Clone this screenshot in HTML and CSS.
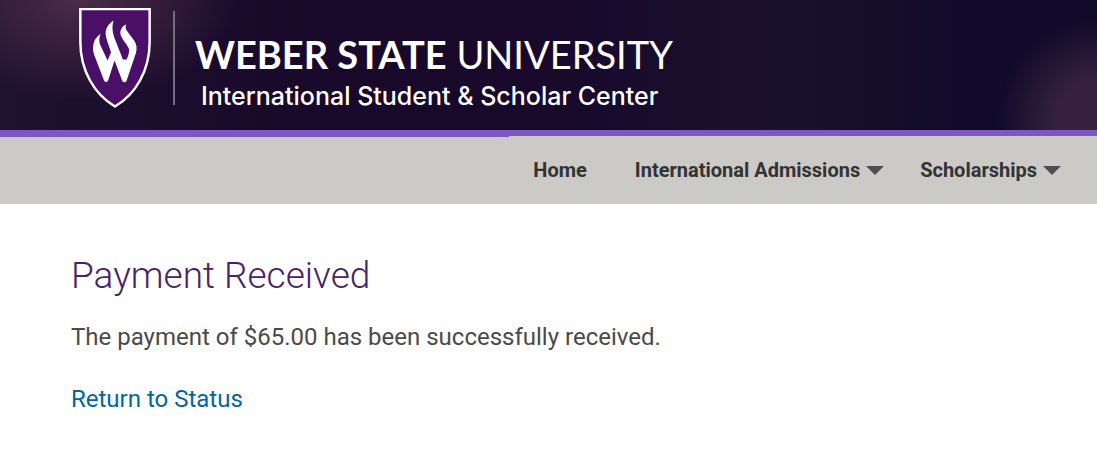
FILE: index.html
```html
<!DOCTYPE html>
<html lang="en">
<head>
  <meta charset="UTF-8">
  <meta name="viewport" content="width=device-width, initial-scale=1.0">
  <title>Payment Received</title>
  <link rel="stylesheet" href="styles.css">
</head>
<body>
  <header class="banner">
    <svg class="shield" viewBox="0 0 72 102" aria-hidden="true">
      <path d="M1 1H71V34C71 63 57 87 36 99.500C15 87 1 63 1 34Z" fill="#4a0f66" stroke="#fff" stroke-width="2.500"/>
      <path d="M21.700 26C17 29 14.500 33 14 38C13.300 43 14.500 46 16 50L25 73.500Q27 76 29 73.500L35.500 53L43.500 74Q45.500 76 47.500 74L57 46C58.500 41 58 37 55.500 33L48 23C46.500 21 46.500 19 47.200 16.300C43 18.500 41 22 41.500 26C42 31 49 37 50.300 42C50.500 46 49 49 47.700 52H44L35 29C33 23 33 18 34.500 12.700C29.500 16 27 20 26.500 25C26.500 31 30.500 39 32 45L28.500 53L21 37C19.500 33 20 29.500 21.700 26Z" fill="#fff"/>
    </svg>
    <div class="wordmark">
      <a class="university" href="#"><strong>WEBER STATE</strong> UNIVERSITY</a>
      <a class="department" href="#">International Student &amp; Scholar Center</a>
    </div>
  </header>

  <nav class="navbar">
    <ul class="menu">
      <li class="plain"><a href="#">Home</a></li>
      <li><a class="dropdown" href="#">International Admissions</a></li>
      <li><a class="dropdown" href="#">Scholarships</a></li>
    </ul>
  </nav>

  <main class="content">
    <h1>Payment Received</h1>
    <p>The payment of $65.00 has been successfully received.</p>
    <p><a href="#">Return to Status</a></p>
  </main>
</body>
</html>
```
FILE: styles.css
```css
* {
  margin: 0;
  padding: 0;
  box-sizing: border-box;
}

body {
  background-color: #fff;
  color: #4a4a4a;
  font-family: Roboto, sans-serif;
  font-size: 24px;
  line-height: 30px;
}

a {
  color: #0066a1;
  text-decoration: none;
}

/* Banner */
.banner {
  display: flex;
  align-items: flex-start;
  padding: 8px 79px 21px;
  background:
    radial-gradient(ellipse 160px 100px at 80px 0, #4a2b48, transparent),
    radial-gradient(circle 100px at 100% 120px, #35213f 40%, transparent),
    linear-gradient(90deg, #1e1230, #180829 30%, #180a2c 55%, #1a112c 70%, #120a2a 88%, #120a2a);
  border-bottom: 7px solid #7e57c5;
}

.shield {
  width: 72px;
  height: 101px;
}

.wordmark {
  display: flex;
  flex-direction: column;
  height: 94px;
  margin: 3px 0 0 22px;
  padding: 21px 0 0 20px;
  border-left: 2px solid #776c80;
}

.wordmark a {
  color: #fff;
  white-space: nowrap;
}

.university {
  font-family: Lato, sans-serif;
  font-size: 38px;
  line-height: 44px;
}

.university strong {
  font-weight: 700;
}

.department {
  padding-left: 6px;
  font-family: Inter, sans-serif;
  font-size: 25px;
  font-weight: 500;
  line-height: 40px;
}

/* Navigation */
.navbar {
  display: flex;
  justify-content: flex-end;
  background-color: #cbcac6;
}

.menu {
  display: flex;
  gap: 36px;
  margin-top: -1px;
  padding: 19px 36px 19px 24px;
  list-style: none;
  background-color: #cbcac6;
}

.menu .plain {
  padding-right: 12px;
}

.menu a {
  display: flex;
  align-items: center;
  gap: 6px;
  color: #333;
  font-size: 20px;
  font-weight: 700;
  white-space: nowrap;
}

.dropdown::after {
  content: "";
  border: 9px solid transparent;
  border-top-color: #4d4c51;
  border-bottom: 0;
}

/* Content */
.content {
  padding: 48px 71px 16px;
}

h1 {
  margin-bottom: 22px;
  color: #492365;
  font-size: 37px;
  font-weight: 300;
  line-height: 48px;
}

p {
  margin-bottom: 32px;
}
```
